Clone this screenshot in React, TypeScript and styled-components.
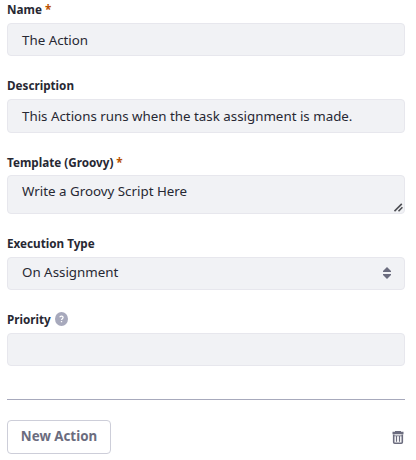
import React from "react";
import styled, { createGlobalStyle } from "styled-components";

const GlobalStyle = createGlobalStyle`
  *, *::before, *::after { box-sizing: border-box; }
  body {
    margin: 0;
    background: #fff;
    color: #272833;
    font-family: "Noto Sans", "Open Sans", sans-serif;
  }
`;

const Form = styled.form`
  width: 416px;
  height: 460px;
  padding: 0 11px 0 7px;
  overflow: hidden;
`;

const Field = styled.div``;

const Label = styled.div<{ $height: number; $bottom?: number }>`
  display: flex;
  align-items: flex-end;
  height: ${(p) => p.$height}px;
  padding-bottom: ${(p) => p.$bottom ?? 6}px;
  font-size: 11.7px;
  font-weight: 700;
  line-height: 16px;
  white-space: nowrap;
`;

const Required = styled.span`
  margin-left: 3px;
  color: #b95000;
`;

const HelpIcon = styled.svg`
  width: 13px;
  height: 14px;
  margin: 0 0 1px 4px;
`;

const Control = styled.div<{ $height: number; $line: number }>`
  display: flex;
  align-items: flex-start;
  justify-content: space-between;
  height: ${(p) => p.$height}px;
  padding-left: 14px;
  border: 1px solid #e7e7ed;
  border-radius: 4px;
  background: #f1f2f5;
  font-size: 13.33px;
  line-height: ${(p) => p.$line}px;
  white-space: nowrap;
`;

const ResizeGrip = styled.svg`
  align-self: flex-end;
  width: 9px;
  height: 9px;
  margin: 0 1px 1px 0;
`;

const Carets = styled.svg`
  align-self: flex-start;
  width: 8px;
  height: 12px;
  margin: 9px 13px 0 0;
`;

const Divider = styled.hr`
  height: 1px;
  margin: 33px 0 20px;
  border: 0;
  background: #a7a9bc;
`;

const Footer = styled.div`
  display: flex;
  align-items: center;
  justify-content: space-between;
`;

const NewButton = styled.button`
  width: 104px;
  height: 34px;
  padding: 0 0 2px;
  border: 1px solid #cdced9;
  border-radius: 4px;
  background: #fff;
  color: #6b6c7e;
  font: 700 13.33px/20px "Noto Sans", "Open Sans", sans-serif;
  white-space: nowrap;
`;

const DeleteButton = styled.button`
  display: flex;
  margin-right: 1px;
  padding: 0;
  border: 0;
  background: none;
`;

export default function App() {
  return (
    <>
      <GlobalStyle />
      <Form>
        <Field>
          <Label $height={23}>
            Name<Required>*</Required>
          </Label>
          <Control $height={33} $line={32}>The Action</Control>
        </Field>
        <Field>
          <Label $height={43}>Description</Label>
          <Control $height={34} $line={32}>
            This Actions runs when the task assignment is made.
          </Control>
        </Field>
        <Field>
          <Label $height={42} $bottom={5}>
            Template (Groovy)<Required>*</Required>
          </Label>
          <Control $height={39} $line={30}>
            Write a Groovy Script Here
            <ResizeGrip viewBox="0 0 9 9" aria-hidden="true">
              <path d="M0.5 8.2L7.8 0.9M4.5 8.2L8.4 4.3" stroke="#4c4d52" strokeWidth="1.6" fill="none" />
            </ResizeGrip>
          </Control>
        </Field>
        <Field>
          <Label $height={43}>Execution Type</Label>
          <Control $height={33} $line={29}>
            On Assignment
            <Carets viewBox="0 0 8 12" aria-hidden="true">
              <path d="M4 0L8 4V5H0V4ZM4 12L8 8V7H0V8Z" fill="#6b6c7e" />
            </Carets>
          </Control>
        </Field>
        <Field>
          <Label $height={43}>
            Priority
            <HelpIcon viewBox="0 0 13 14" aria-hidden="true">
              <ellipse cx="6.5" cy="7" rx="6.5" ry="7" fill="#a7a9bc" />
              <path d="M4.9 5.2C5 3.7 8.1 3.7 8.1 5.5C8.1 6.7 6.5 6.7 6.5 8.1M6.5 9V10.3" fill="none" stroke="#fff" strokeWidth="1.3" />
            </HelpIcon>
          </Label>
          <Control $height={33} $line={30} />
        </Field>
        <Divider />
        <Footer>
          <NewButton type="button">New Action</NewButton>
          <DeleteButton type="button" aria-label="Delete">
            <svg width="12" height="13" viewBox="0 0 12 13" aria-hidden="true">
              <path d="M3 0H9V0.8H11.5V3.2H0.5V0.8H3Z" fill="#6b6c7e" />
              <path d="M1.7 3.5V11.2Q1.7 12.2 2.7 12.2H9.3Q10.3 12.2 10.3 11.2V3.5" fill="none" stroke="#6b6c7e" strokeWidth="1.6" />
              <path d="M2 4.8H10" stroke="#6b6c7e" strokeWidth="0.8" />
              <path d="M4.5 5V10.8M7.5 5V10.8" stroke="#6b6c7e" strokeWidth="1.2" />
            </svg>
          </DeleteButton>
        </Footer>
      </Form>
    </>
  );
}
